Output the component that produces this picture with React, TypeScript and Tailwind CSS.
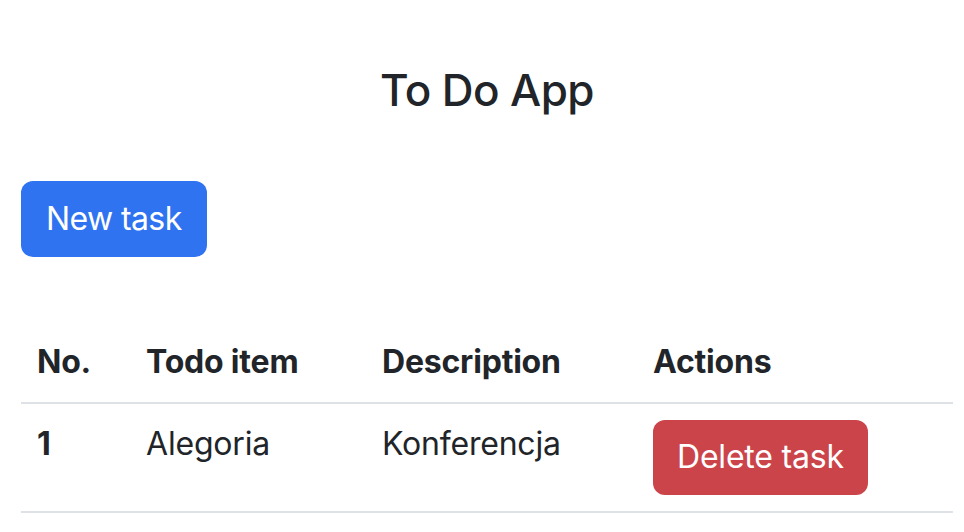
const TASKS = [{ id: 1, title: "Alegoria", description: "Konferencja" }];

export default function App() {
  return (
    <div
      className="min-h-screen bg-white text-[#212529] pl-[21px] pr-[11px]"
      style={{ fontFamily: "Inter, 'Noto Sans', sans-serif" }}
    >
      <h4 className="pt-[64px] text-center text-[44px] leading-[1.2] font-medium tracking-[-0.6px]">
        To Do App
      </h4>

      <div className="mt-[64px]">
        <button className="h-[76px] px-[25px] rounded-[12px] bg-[#2f73f0] text-white text-[32px] leading-[48px] tracking-[-0.6px]">
          New task
        </button>
      </div>

      <table className="mt-[65px] w-full border-collapse text-[32px] leading-[48px] tracking-[-0.2px]">
        <thead>
          <tr className="border-b-2 border-[#dee2e6]">
            <th className="w-[109px] p-4 text-left align-top font-bold">No.</th>
            <th className="w-[236px] p-4 text-left align-top font-bold">Todo item</th>
            <th className="w-[271px] p-4 text-left align-top font-bold">Description</th>
            <th className="p-4 text-left align-top font-bold">Actions</th>
          </tr>
        </thead>
        <tbody>
          {TASKS.map((t) => (
            <tr key={t.id} className="border-b-2 border-[#dee2e6]">
              <th className="p-4 text-left align-top font-bold">{t.id}</th>
              <td className="p-4 align-top">{t.title}</td>
              <td className="p-4 align-top">{t.description}</td>
              <td className="p-4 align-top">
                <button className="h-[75px] px-[24px] rounded-[12px] bg-[#cb444a] text-white text-[32px] leading-[48px]">
                  Delete task
                </button>
              </td>
            </tr>
          ))}
        </tbody>
      </table>
    </div>
  );
}
